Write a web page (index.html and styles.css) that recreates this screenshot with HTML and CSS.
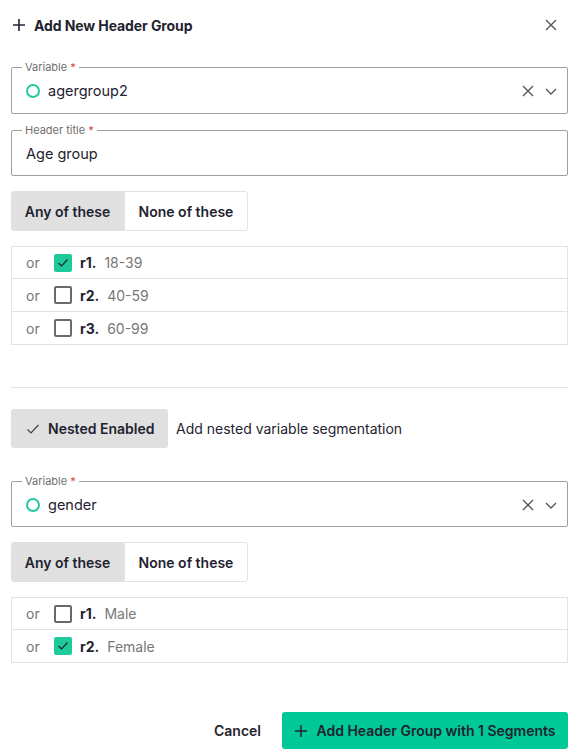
FILE: index.html
```html
<!DOCTYPE html>
<html>
<head>
<meta charset="utf-8">
<link rel="stylesheet" href="styles.css">
</head>
<body>
<div class="dialog">
  <div class="header">
    <div class="title">
      <svg class="plus" width="14" height="14" viewBox="0 0 14 14"><path d="M7 1v12M1 7h12" stroke="#1f2330" stroke-width="1.6" fill="none"/></svg>
      <span>Add New Header Group</span>
    </div>
    <svg class="close" width="14" height="14" viewBox="0 0 14 14"><path d="M2 2l10 10M12 2L2 12" stroke="#555" stroke-width="1.4" fill="none"/></svg>
  </div>

  <fieldset class="field f1">
    <legend>Variable <span class="req">*</span></legend>
    <div class="field-row">
      <span class="ring"></span>
      <span class="value">agergroup2</span>
      <span class="icons">
        <svg width="14" height="14" viewBox="0 0 14 14"><path d="M2 2l10 10M12 2L2 12" stroke="#555" stroke-width="1.4" fill="none"/></svg>
        <svg width="14" height="14" viewBox="0 0 14 14"><path d="M2 5l5 5 5-5" stroke="#555" stroke-width="1.3" fill="none"/></svg>
      </span>
    </div>
  </fieldset>

  <fieldset class="field f2">
    <legend>Header title <span class="req">*</span></legend>
    <div class="field-row">
      <span class="value plain">Age group</span>
    </div>
  </fieldset>

  <div class="toggle t1">
    <div class="tbtn active">Any of these</div>
    <div class="tbtn other">None of these</div>
  </div>

  <div class="list l1">
    <div class="row"><span class="or">or</span><span class="cb checked"><svg width="12" height="10" viewBox="0 0 12 10"><path d="M1.5 5l3 3 6-6.5" stroke="#1f2a2a" stroke-width="1.2" fill="none"/></svg></span><b>r1.</b><span class="lbl">18-39</span></div>
    <div class="row"><span class="or">or</span><span class="cb"></span><b>r2.</b><span class="lbl">40-59</span></div>
    <div class="row"><span class="or">or</span><span class="cb"></span><b>r3.</b><span class="lbl">60-99</span></div>
  </div>

  <div class="divider"></div>

  <div class="nested">
    <div class="nbtn">
      <svg width="14" height="12" viewBox="0 0 14 12"><path d="M1.5 6.5l3.5 3.5 7.5-8" stroke="#444" stroke-width="1.2" fill="none"/></svg>
      <span>Nested Enabled</span>
    </div>
    <span class="ntext">Add nested variable segmentation</span>
  </div>

  <fieldset class="field f3">
    <legend>Variable <span class="req">*</span></legend>
    <div class="field-row">
      <span class="ring"></span>
      <span class="value">gender</span>
      <span class="icons">
        <svg width="14" height="14" viewBox="0 0 14 14"><path d="M2 2l10 10M12 2L2 12" stroke="#555" stroke-width="1.4" fill="none"/></svg>
        <svg width="14" height="14" viewBox="0 0 14 14"><path d="M2 5l5 5 5-5" stroke="#555" stroke-width="1.3" fill="none"/></svg>
      </span>
    </div>
  </fieldset>

  <div class="toggle t2">
    <div class="tbtn active">Any of these</div>
    <div class="tbtn other">None of these</div>
  </div>

  <div class="list l2">
    <div class="row"><span class="or">or</span><span class="cb"></span><b>r1.</b><span class="lbl">Male</span></div>
    <div class="row"><span class="or">or</span><span class="cb checked"><svg width="12" height="10" viewBox="0 0 12 10"><path d="M1.5 5l3 3 6-6.5" stroke="#1f2a2a" stroke-width="1.2" fill="none"/></svg></span><b>r2.</b><span class="lbl">Female</span></div>
  </div>

  <div class="footer">
    <span class="cancel">Cancel</span>
    <div class="primary">
      <svg width="14" height="14" viewBox="0 0 14 14"><path d="M7 1v12M1 7h12" stroke="#1f2330" stroke-width="1.5" fill="none"/></svg>
      <span>Add Header Group with 1 Segments</span>
    </div>
  </div>
</div>
</body>
</html>
```
FILE: styles.css
```css
* { box-sizing: border-box; }
body {
  margin: 0;
  background: #fff;
  font-family: Inter, "Noto Sans", sans-serif;
  color: #1f2330;
  font-size: 14px;
}
.dialog {
  width: 584px;
  padding: 0 16px 0 11px;
}
.header {
  height: 50px;
  display: flex;
  align-items: center;
  justify-content: space-between;
  padding: 0 0 0 1px;
}
.title {
  display: flex;
  align-items: center;
  gap: 8px;
  font-weight: 700;
  font-size: 14px;
  letter-spacing: -0.1px;
}
.close { margin-right: 10px; }

.field {
  margin: 11px 0 0;
  border: 1px solid #9e9e9e;
  border-radius: 2px;
  padding: 0 14px 5px;
  min-width: 0;
}
.field legend {
  font-size: 11px;
  line-height: 12px;
  color: #707070;
  padding: 0 3px;
  margin-left: -4px;
}
.req { color: #d9413a; }
.f2 { margin-top: 10px; padding-bottom: 4px; }
.f3 { margin-top: 27px; padding-bottom: 4px; }
.field-row {
  height: 35px;
  display: flex;
  align-items: center;
}
.ring {
  width: 14px;
  height: 14px;
  border: 2px solid #22c9a1;
  border-radius: 50%;
  margin-left: 0;
  margin-right: 8px;
  flex: none;
}
.value { font-size: 14.5px; flex: 1; }
.icons {
  display: flex;
  gap: 9px;
  align-items: center;
  margin-right: -5px;
}

.toggle {
  display: flex;
  margin-top: 15px;
  height: 40px;
}
.tbtn {
  display: flex;
  align-items: center;
  justify-content: center;
  white-space: nowrap;
  font-weight: 600;
  font-size: 14px;
  border: 1px solid #e3e3e3;
  background: #fff;
}
.tbtn.active {
  background: #e0e0e0;
  border-color: #e0e0e0;
  border-radius: 3px 0 0 3px;
  width: 113px;
}
.tbtn.other {
  width: 124px;
  border-radius: 0 3px 3px 0;
}

.list {
  margin-top: 15px;
  border: 1px solid #e3e3e3;
}
.row {
  height: 33px;
  display: flex;
  align-items: center;
  padding-left: 14px;
  border-top: 1px solid #e3e3e3;
  font-size: 14px;
}
.row:first-child { border-top: none; height: 31px; }
.or { color: #777; width: 28px; }
.cb {
  width: 18px;
  height: 18px;
  border: 2px solid #6a6a6a;
  border-radius: 2px;
  margin-right: 8px;
  display: flex;
  align-items: center;
  justify-content: center;
}
.cb.checked { background: #1ec99b; border-color: #1ec99b; }
.row b { font-weight: 700; margin-right: 8px; }
.lbl { color: #777; }

.divider {
  margin-top: 42px;
  height: 1px;
  background: #e3e3e3;
}
.nested {
  margin-top: 21px;
  display: flex;
  align-items: center;
  gap: 8px;
}
.nbtn {
  height: 39px;
  width: 157px;
  background: #e0e0e0;
  border-radius: 3px;
  display: flex;
  align-items: center;
  gap: 8px;
  padding-left: 15px;
  font-weight: 600;
}
.ntext { font-size: 14px; }

.footer {
  margin-top: 49px;
  display: flex;
  justify-content: flex-end;
  align-items: center;
  gap: 21px;
}
.cancel { font-weight: 600; }
.primary {
  height: 37px;
  width: 286px;
  background: #00c997;
  border-radius: 3px;
  display: flex;
  align-items: center;
  justify-content: center;
  gap: 8px;
  font-weight: 600;
}
```
